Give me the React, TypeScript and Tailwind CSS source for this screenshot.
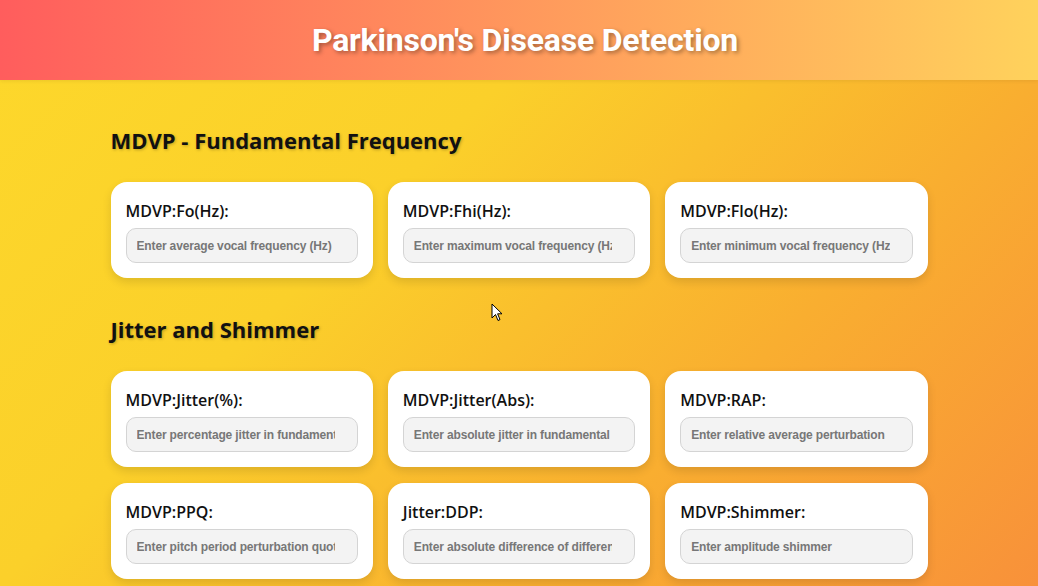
import React from 'react';

type Field = { label: string; placeholder: string };

const sections: { title: string; fields: Field[] }[] = [
  {
    title: 'MDVP - Fundamental Frequency',
    fields: [
      { label: 'MDVP:Fo(Hz):', placeholder: 'Enter average vocal frequency (Hz)' },
      { label: 'MDVP:Fhi(Hz):', placeholder: 'Enter maximum vocal frequency (Hz)' },
      { label: 'MDVP:Flo(Hz):', placeholder: 'Enter minimum vocal frequency (Hz)' },
    ],
  },
  {
    title: 'Jitter and Shimmer',
    fields: [
      { label: 'MDVP:Jitter(%):', placeholder: 'Enter percentage jitter in fundamental frequency' },
      { label: 'MDVP:Jitter(Abs):', placeholder: 'Enter absolute jitter in fundamental frequency' },
      { label: 'MDVP:RAP:', placeholder: 'Enter relative average perturbation' },
      { label: 'MDVP:PPQ:', placeholder: 'Enter pitch period perturbation quotient' },
      { label: 'Jitter:DDP:', placeholder: 'Enter absolute difference of differences' },
      { label: 'MDVP:Shimmer:', placeholder: 'Enter amplitude shimmer' },
    ],
  },
];

const InputCard: React.FC<Field> = ({ label, placeholder }) => (
  <div className="bg-white rounded-[16px] pt-[18px] pb-[15px] px-[15px] shadow-[0_4px_10px_rgba(0,0,0,0.12)]">
    <label className="block text-[16px] leading-[22px] font-semibold text-[#111] font-['Open_Sans',sans-serif] mb-[6px]">
      {label}
    </label>
    <input
      type="text"
      placeholder={placeholder}
      className="w-full h-[35px] rounded-[10px] bg-[#f3f3f3] border border-[#d4d4d4] pl-[10px] pr-[22px] text-[12px] font-bold tracking-[-0.15px] text-[#333] placeholder:text-[#777] font-['Liberation_Sans',sans-serif] outline-none"
    />
  </div>
);

export default function App() {
  return (
    <div className="min-h-screen bg-fixed bg-[linear-gradient(135deg,#fdd82b_0%,#fbd02a_36%,#f9ae30_69%,#f8913a_100%)]">
      <header className="h-[80px] flex items-center justify-center bg-[linear-gradient(to_right,#ff5d5d,#ffd25c)] shadow-[0_1px_4px_rgba(0,0,0,0.08)]">
        <h1 className="ml-[12px] text-white text-[32px] font-bold font-['Roboto',sans-serif] tracking-[-0.2px] [text-shadow:2px_2px_4px_rgba(0,0,0,0.35)]">
          Parkinson's Disease Detection
        </h1>
      </header>

      <main className="w-[817px] mx-auto pt-[45px] pb-10">
        {sections.map((s, i) => (
          <section key={s.title} className={i > 0 ? 'mt-[36px]' : ''}>
            <h2 className="text-[22px] leading-[30px] font-bold text-[#111] font-['Open_Sans',sans-serif] mb-[27px] [text-shadow:1px_1px_3px_rgba(0,0,0,0.25)]">
              {s.title}
            </h2>
            <div className="grid grid-cols-3 gap-x-[15px] gap-y-[16px]">
              {s.fields.map((f) => (
                <InputCard key={f.label} {...f} />
              ))}
            </div>
          </section>
        ))}
      </main>

      {/* mouse pointer captured in the screenshot */}
      <svg className="fixed left-[491px] top-[303px]" width="12" height="19" viewBox="0 0 12 19">
        <path d="M1 1 L1 15 L4.5 11.5 L7 17.5 L9 16.6 L6.6 10.8 L11 10.8 Z" fill="#fff" stroke="#000" strokeWidth="1" strokeLinejoin="round" />
      </svg>
    </div>
  );
}
